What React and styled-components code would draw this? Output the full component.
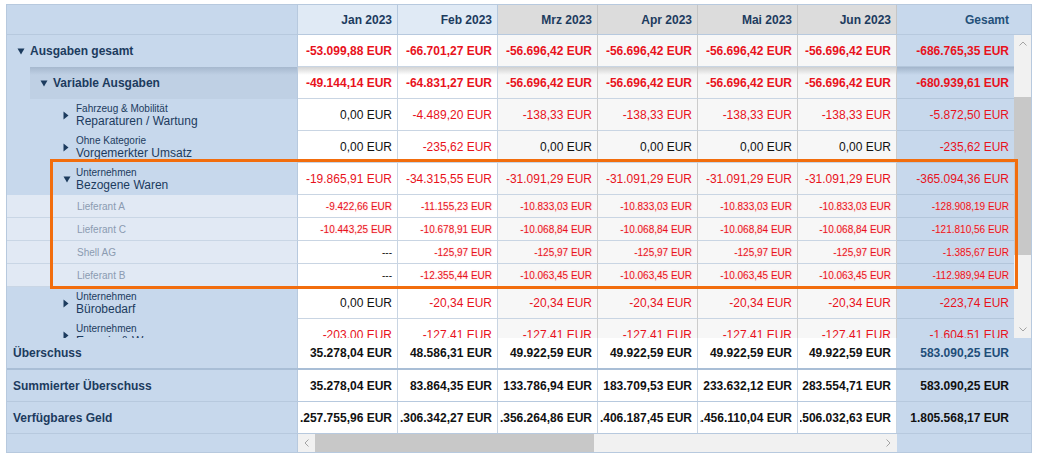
import React from 'react';
import styled, { createGlobalStyle } from 'styled-components';

const GlobalStyle = createGlobalStyle`
  body {
    margin: 0;
    background: #fff;
    font-family: "Liberation Sans", Arial, sans-serif;
  }
`;

const BLUE = '#c7d8ec';
const LINE = '#b7c9de';
const CELL_LINE = '#c9d5e3';
const INK = '#1c3b5e';
const RED = '#e8121c';

const bg = { past: '#ffffff', future: '#f7f7f7', total: BLUE };
const shadeTop = { past: '#d4d4d4', future: '#d0d0d0', total: '#a3b5cb' };

const months = ['Jan 2023', 'Feb 2023', 'Mrz 2023', 'Apr 2023', 'Mai 2023', 'Jun 2023'];
const toneOf = (i) => (i < 2 ? 'past' : i < 6 ? 'future' : 'total');

const rows = [
  { kind: 'group', level: 0, caret: 'down', title: 'Ausgaben gesamt',
    values: ['-53.099,88', '-66.701,27', '-56.696,42', '-56.696,42', '-56.696,42', '-56.696,42', '-686.765,35'] },
  { kind: 'group', level: 1, caret: 'down', title: 'Variable Ausgaben', shade: true,
    values: ['-49.144,14', '-64.831,27', '-56.696,42', '-56.696,42', '-56.696,42', '-56.696,42', '-680.939,61'] },
  { kind: 'cat', level: 2, caret: 'right', sub: 'Fahrzeug & Mobilität', title: 'Reparaturen / Wartung',
    values: ['0,00', '-4.489,20', '-138,33', '-138,33', '-138,33', '-138,33', '-5.872,50'] },
  { kind: 'cat', level: 2, caret: 'right', sub: 'Ohne Kategorie', title: 'Vorgemerkter Umsatz',
    values: ['0,00', '-235,62', '0,00', '0,00', '0,00', '0,00', '-235,62'] },
  { kind: 'cat', level: 2, caret: 'down', sub: 'Unternehmen', title: 'Bezogene Waren',
    values: ['-19.865,91', '-34.315,55', '-31.091,29', '-31.091,29', '-31.091,29', '-31.091,29', '-365.094,36'] },
  { kind: 'item', title: 'Lieferant A',
    values: ['-9.422,66', '-11.155,23', '-10.833,03', '-10.833,03', '-10.833,03', '-10.833,03', '-128.908,19'] },
  { kind: 'item', title: 'Lieferant C',
    values: ['-10.443,25', '-10.678,91', '-10.068,84', '-10.068,84', '-10.068,84', '-10.068,84', '-121.810,56'] },
  { kind: 'item', title: 'Shell AG',
    values: ['---', '-125,97', '-125,97', '-125,97', '-125,97', '-125,97', '-1.385,67'] },
  { kind: 'item', title: 'Lieferant B',
    values: ['---', '-12.355,44', '-10.063,45', '-10.063,45', '-10.063,45', '-10.063,45', '-112.989,94'] },
  { kind: 'cat', level: 2, caret: 'right', sub: 'Unternehmen', title: 'Bürobedarf',
    values: ['0,00', '-20,34', '-20,34', '-20,34', '-20,34', '-20,34', '-223,74'] },
  { kind: 'cat', level: 2, caret: 'right', sub: 'Unternehmen', title: 'Energie & Wasser',
    values: ['-203,00', '-127,41', '-127,41', '-127,41', '-127,41', '-127,41', '-1.604,51'] },
  { kind: 'cat', level: 2, caret: 'right', sub: 'Unternehmen', title: 'Versicherungen',
    values: ['-512,40', '-512,40', '-512,40', '-512,40', '-512,40', '-512,40', '-6.148,80'] },
];

const summary = [
  { title: 'Überschuss', thick: true, highlightTotal: true,
    values: ['35.278,04', '48.586,31', '49.922,59', '49.922,59', '49.922,59', '49.922,59', '583.090,25'] },
  { title: 'Summierter Überschuss',
    values: ['35.278,04', '83.864,35', '133.786,94', '183.709,53', '233.632,12', '283.554,71', '583.090,25'] },
  { title: 'Verfügbares Geld',
    values: ['1.257.755,96', '1.306.342,27', '1.356.264,86', '1.406.187,45', '1.456.110,04', '1.506.032,63', '1.805.568,17'] },
];

const App = () => {
  return (
    <>
      <GlobalStyle />
      <Frame>
        <HeaderRow>
          <HeadLabel />
          {months.map((m, i) => (
            <HeadCell key={m} $tone={toneOf(i)}>{m}</HeadCell>
          ))}
          <HeadCell $tone="total" $wide>Gesamt</HeadCell>
        </HeaderRow>

        <BodyArea>
          <Viewport>
            {rows.map((r) => (
              <Row key={r.title} $h={r.kind === 'item' ? 23 : 32}>
                <LabelCell $kind={r.kind} $level={r.level} $shade={r.shade}>
                  {r.caret && (
                    <Caret>
                      {r.caret === 'down' ? (
                        <svg width="8" height="7" viewBox="0 0 8 7">
                          <polygon points="0.5,0.5 7.5,0.5 4,6.5" fill={INK} />
                        </svg>
                      ) : (
                        <svg width="6" height="9" viewBox="0 0 6 9">
                          <polygon points="0.5,0.5 5.5,4.5 0.5,8.5" fill={INK} />
                        </svg>
                      )}
                    </Caret>
                  )}
                  {r.kind === 'cat' ? (
                    <Stack>
                      <SubTitle>{r.sub}</SubTitle>
                      <MainTitle>{r.title}</MainTitle>
                    </Stack>
                  ) : (
                    <span>{r.title}</span>
                  )}
                </LabelCell>
                {r.values.map((v, i) => (
                  <ValueCell
                    key={i}
                    $tone={toneOf(i)}
                    $kind={r.kind}
                    $shade={r.shade}
                    $neg={v.startsWith('-') && v !== '---'}
                    $last={i === 6}
                  >
                    {v === '---' ? v : `${v} EUR`}
                  </ValueCell>
                ))}
              </Row>
            ))}
          </Viewport>
          <VScroll>
            <ArrowBox>
              <svg width="8" height="5" viewBox="0 0 8 5">
                <polyline points="0.5,4.5 4,1 7.5,4.5" fill="none" stroke="#a3a3a3" strokeWidth="1" />
              </svg>
            </ArrowBox>
            <VThumb />
            <Spacer />
            <ArrowBox>
              <svg width="8" height="5" viewBox="0 0 8 5">
                <polyline points="0.5,0.5 4,4 7.5,0.5" fill="none" stroke="#a3a3a3" strokeWidth="1" />
              </svg>
            </ArrowBox>
          </VScroll>
        </BodyArea>

        {summary.map((s) => (
          <SumRow key={s.title} $thick={s.thick}>
            <SumLabel>{s.title}</SumLabel>
            {s.values.map((v, i) => (
              <SumValue key={i} $total={i === 6} $accent={s.highlightTotal && i === 6}>
                <Clip>{v} EUR</Clip>
              </SumValue>
            ))}
          </SumRow>
        ))}

        <ScrollRow>
          <ScrollLabel />
          <HTrack>
            <HArrow>
              <svg width="5" height="8" viewBox="0 0 5 8">
                <polyline points="4.5,0.5 1,4 4.5,7.5" fill="none" stroke="#a3a3a3" strokeWidth="1" />
              </svg>
            </HArrow>
            <HThumb />
            <Spacer />
            <HArrow>
              <svg width="5" height="8" viewBox="0 0 5 8">
                <polyline points="0.5,0.5 4,4 0.5,7.5" fill="none" stroke="#a3a3a3" strokeWidth="1" />
              </svg>
            </HArrow>
          </HTrack>
          <ScrollLabel $end />
        </ScrollRow>

        <Highlight />
      </Frame>
    </>
  );
};

export default App;

const Frame = styled.div`
  position: relative;
  box-sizing: border-box;
  width: 1026px;
  margin: 4px 0 0 6px;
  border: 1px solid ${LINE};
  background: ${BLUE};
  overflow: hidden;
  font-family: "Liberation Sans", Arial, sans-serif;
`;

const HeaderRow = styled.div`
  display: grid;
  grid-template-columns: 291px repeat(5, 100px) 99px 134px;
  height: 30px;
  box-sizing: border-box;
  border-bottom: 1px solid ${LINE};
`;

const HeadLabel = styled.div`
  background: ${BLUE};
  border-right: 1px solid ${LINE};
`;

const HeadCell = styled.div`
  display: flex;
  align-items: center;
  justify-content: flex-end;
  padding-right: ${(p) => (p.$wide ? 22 : 5)}px;
  border-right: ${(p) => (p.$wide ? 'none' : `1px solid ${p.$tone === 'future' ? '#c6c6c6' : LINE}`)};
  background: ${(p) => (p.$tone === 'past' ? '#e0eaf5' : p.$tone === 'future' ? '#dcdcdc' : BLUE)};
  color: ${(p) => (p.$wide ? '#245079' : INK)};
  font-size: 12px;
  font-weight: bold;
`;

const BodyArea = styled.div`
  display: flex;
  height: 303px;
`;

const Viewport = styled.div`
  width: 1007px;
  overflow: hidden;
`;

const Row = styled.div`
  display: grid;
  grid-template-columns: 291px repeat(5, 100px) 99px 117px;
  height: ${(p) => p.$h}px;
`;

const labelBackground = (p) => {
  if (p.$kind === 'item') return '#e1e9f4';
  if (p.$shade) {
    return `linear-gradient(to right, ${BLUE} 23px, transparent 23px), linear-gradient(#a6b8ce, #bfd0e4 8px)`;
  }
  return BLUE;
};

const LabelCell = styled.div`
  box-sizing: border-box;
  display: flex;
  align-items: center;
  padding-left: ${(p) => (p.$kind === 'item' ? 70 : 10 + p.$level * 23)}px;
  border-right: 1px solid ${LINE};
  border-bottom: ${(p) => (p.$kind === 'item' ? '1px solid #c9d6e5' : 'none')};
  background: ${labelBackground};
  color: ${(p) => (p.$kind === 'item' ? '#8b9bb1' : INK)};
  font-size: ${(p) => (p.$kind === 'item' ? 10 : 12)}px;
  font-weight: ${(p) => (p.$kind === 'group' ? 'bold' : 'normal')};
  white-space: nowrap;
  overflow: hidden;
`;

const Caret = styled.span`
  flex: none;
  width: 8px;
  margin-right: 5px;
  display: flex;
  align-items: center;
`;

const Stack = styled.div`
  display: flex;
  flex-direction: column;
`;

const SubTitle = styled.span`
  font-size: 10px;
  line-height: 11px;
`;

const MainTitle = styled.span`
  font-size: 12px;
  line-height: 14px;
`;

const ValueCell = styled.div`
  box-sizing: border-box;
  display: flex;
  align-items: center;
  justify-content: flex-end;
  padding-right: 5px;
  white-space: nowrap;
  overflow: hidden;
  border-right: ${(p) => (p.$last ? 'none' : `1px solid ${p.$tone === 'future' ? '#cccccc' : CELL_LINE}`)};
  border-bottom: 1px solid ${(p) => (p.$tone === 'total' ? '#b3c6db' : CELL_LINE)};
  background: ${(p) => (p.$shade ? `linear-gradient(${shadeTop[p.$tone]}, ${bg[p.$tone]} 8px)` : bg[p.$tone])};
  color: ${(p) => (p.$neg ? RED : '#111')};
  font-size: ${(p) => (p.$kind === 'item' ? 10 : 12)}px;
  font-weight: ${(p) => (p.$kind === 'group' ? 'bold' : 'normal')};
  text-shadow: ${(p) => (p.$kind === 'item' && p.$neg ? '0 0 2px #ffc2c2' : 'none')};
`;

const VScroll = styled.div`
  width: 17px;
  display: flex;
  flex-direction: column;
  background: #f1f1f1;
`;

const ArrowBox = styled.div`
  flex: none;
  height: 17px;
  display: flex;
  align-items: center;
  justify-content: center;
`;

const VThumb = styled.div`
  flex: none;
  height: 158px;
  margin-top: 45px;
  background: #c8c8c8;
`;

const Spacer = styled.div`
  flex: 1;
`;

const SumRow = styled.div`
  display: grid;
  grid-template-columns: 291px repeat(5, 100px) 99px 134px;
  height: 32px;
  box-sizing: border-box;
  border-bottom: ${(p) => (p.$thick ? '2px solid #a9bed6' : `1px solid ${LINE}`)};
`;

const SumLabel = styled.div`
  display: flex;
  align-items: center;
  padding-left: 6px;
  background: ${BLUE};
  border-right: 1px solid ${LINE};
  color: ${INK};
  font-size: 12px;
  font-weight: bold;
`;

const SumValue = styled.div`
  display: flex;
  align-items: center;
  padding-left: 2px;
  padding-right: ${(p) => (p.$total ? 22 : 5)}px;
  min-width: 0;
  background: ${(p) => (p.$total ? BLUE : '#fff')};
  border-right: ${(p) => (p.$total ? 'none' : `1px solid ${CELL_LINE}`)};
  color: ${(p) => (p.$accent ? '#1f4e79' : '#111')};
  font-size: 12px;
  font-weight: bold;
`;

const Clip = styled.div`
  flex: 1;
  min-width: 0;
  display: flex;
  justify-content: flex-end;
  white-space: nowrap;
  overflow: hidden;
`;

const ScrollRow = styled.div`
  display: grid;
  grid-template-columns: 291px 599px 134px;
  height: 18px;
`;

const ScrollLabel = styled.div`
  background: ${BLUE};
  border-right: ${(p) => (p.$end ? 'none' : `1px solid ${LINE}`)};
`;

const HTrack = styled.div`
  display: flex;
  background: #f1f1f1;
`;

const HArrow = styled.div`
  flex: none;
  width: 17px;
  display: flex;
  align-items: center;
  justify-content: center;
`;

const HThumb = styled.div`
  flex: none;
  width: 279px;
  background: #c8c8c8;
`;

const Highlight = styled.div`
  position: absolute;
  left: 43px;
  top: 154px;
  width: 968px;
  height: 130px;
  box-sizing: border-box;
  border: 3px solid #f26d0d;
  pointer-events: none;
`;
